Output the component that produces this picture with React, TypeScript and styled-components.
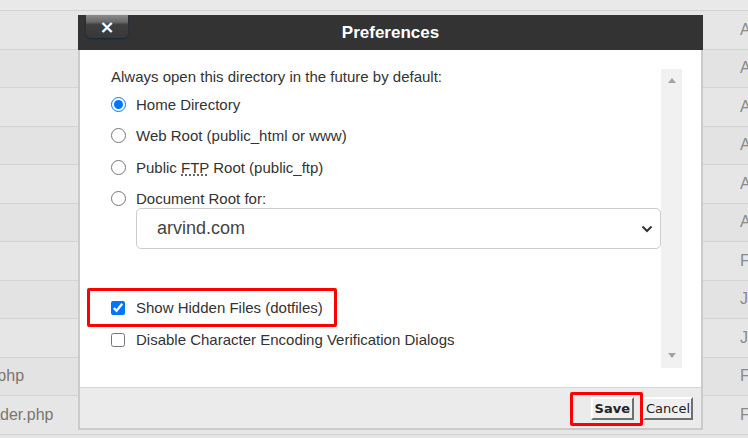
import React from 'react';
import styled, { createGlobalStyle } from 'styled-components';

interface FileRow {
    name: string;
    modified: string;
}

const files: FileRow[] = [
    { name: '.well-known', modified: 'Apr 3, 2021, 10:12 AM' },
    { name: 'cgi-bin', modified: 'Apr 3, 2021, 10:12 AM' },
    { name: 'wp-admin', modified: 'Apr 14, 2021, 4:20 PM' },
    { name: 'wp-content', modified: 'Apr 14, 2021, 4:22 PM' },
    { name: 'wp-includes', modified: 'Apr 14, 2021, 4:20 PM' },
    { name: '.htaccess', modified: 'Apr 14, 2021, 4:31 PM' },
    { name: 'index.php', modified: 'Feb 6, 2020, 7:33 AM' },
    { name: 'license.txt', modified: 'Jan 1, 2021, 12:00 AM' },
    { name: 'robots.txt', modified: 'Jan 1, 2021, 12:00 AM' },
    { name: 'wp-activate.php', modified: 'Feb 6, 2020, 7:33 AM' },
    { name: 'wp-blog-header.php', modified: 'Feb 6, 2020, 7:33 AM' },
];

const GlobalStyle = createGlobalStyle`
    html, body {
        margin: 0;
        padding: 0;
        overflow: hidden;
    }
    body {
        font-family: "Liberation Sans", Arial, sans-serif;
    }
`;

const Page = styled.div`
    position: relative;
    width: 748px;
    height: 438px;
    overflow: hidden;
    background: #e5e5e5;
`;

const FileTable = styled.div`
    display: flex;
    flex-direction: column;
`;

const TopStrip = styled.div`
    height: 11px;
    box-sizing: border-box;
    background: #e9e9e9;
    border-bottom: 1px solid #d3d3d3;
`;

const Row = styled.div<{ $alt: boolean }>`
    height: 38.5px;
    box-sizing: border-box;
    display: flex;
    align-items: center;
    border-bottom: 1px solid #d3d3d3;
    background: ${(p) => (p.$alt ? '#e3e3e3' : '#e6e6e6')};
    font-size: 16px;
    white-space: nowrap;
`;

const NameCell = styled.div`
    margin-left: -88px;
    width: 828px;
    flex: none;
    color: #7c746c;
`;

const DateCell = styled.div`
    flex: none;
    color: #8a8a8a;
`;

const Dialog = styled.div`
    position: absolute;
    left: 78px;
    top: 15px;
    width: 625px;
    display: flex;
    flex-direction: column;
`;

const Header = styled.div`
    height: 35px;
    background: #333333;
    display: grid;
    grid-template-columns: 1fr auto 1fr;
    align-items: center;
`;

const CloseButton = styled.button`
    align-self: start;
    justify-self: start;
    margin-left: 8px;
    width: 42px;
    height: 23px;
    padding: 0;
    border: none;
    border-radius: 0 0 5px 5px;
    background: linear-gradient(#8a8a8a 0%, #6a6a6a 30%, #3f3f3f 42%, #383838 100%);
    box-shadow: 0 1px 2px #10283c;
    color: #fff;
    font: bold 18px/23px "DejaVu Sans", sans-serif;
`;

const Title = styled.h1`
    margin: 0;
    color: #fff;
    font-size: 17px;
    font-weight: bold;
`;

const Panel = styled.div`
    border: 2px solid #cbcbcb;
    border-top: none;
    display: flex;
    flex-direction: column;
`;

const Body = styled.div`
    height: 337px;
    box-sizing: border-box;
    padding: 19px 19px 19px 31px;
    background: #fff;
`;

const Scroller = styled.div`
    display: flex;
    height: 299px;
`;

const Content = styled.div`
    flex: 1;
    display: flex;
    flex-direction: column;
    color: #333;
    font-size: 15px;
`;

const Prompt = styled.div`
    line-height: 16px;
    margin-bottom: 9px;
`;

const OptionList = styled.div`
    display: flex;
    flex-direction: column;
    gap: 11.5px;
`;

const Option = styled.label`
    position: relative;
    display: flex;
    align-items: center;
    height: 20px;
`;

const Radio = styled.input.attrs({ type: 'radio', name: 'dirpref' })`
    width: 15px;
    height: 15px;
    margin: 0 10px 0 0;
    accent-color: #0075ff;
`;

const Checkbox = styled.input.attrs({ type: 'checkbox' })`
    width: 14px;
    height: 14px;
    margin: 0 11px 0 0;
`;

const Abbr = styled.abbr`
    text-decoration: underline dotted;
    text-underline-offset: 2px;
`;

const DocRoot = styled.div`
    display: flex;
    flex-direction: column;
`;

const SelectWrap = styled.div`
    position: relative;
    margin: -1px 0 0 25px;
`;

const DomainSelect = styled.select`
    width: 100%;
    height: 41.5px;
    box-sizing: border-box;
    appearance: none;
    padding: 0 0 0 20px;
    border: 1px solid #cccccc;
    border-radius: 5px;
    background: #fff;
    color: #444;
    font: 18px "Liberation Sans", Arial, sans-serif;
`;

const Chevron = styled.svg`
    position: absolute;
    right: 8px;
    top: 17px;
    pointer-events: none;
`;

const CheckList = styled.div`
    display: flex;
    flex-direction: column;
    gap: 12px;
    margin-top: 48.5px;
`;

const Highlight = styled.div<{ $left: number; $top: number; $width: number; $height: number }>`
    position: absolute;
    left: ${(p) => p.$left}px;
    top: ${(p) => p.$top}px;
    width: ${(p) => p.$width}px;
    height: ${(p) => p.$height}px;
    box-sizing: border-box;
    border: 3px solid #ff0000;
    border-radius: 2px;
    pointer-events: none;
`;

const Scrollbar = styled.div`
    width: 21px;
    flex: none;
    background: #f1f1f1;
    display: flex;
    flex-direction: column;
    justify-content: space-between;
    align-items: center;
    padding: 9px 0 10px;
    box-sizing: border-box;
`;

const Arrow = styled.div<{ $down?: boolean }>`
    width: 0;
    height: 0;
    border-left: 4.5px solid transparent;
    border-right: 4.5px solid transparent;
    ${(p) => (p.$down ? 'border-top: 5px solid #a3a3a3;' : 'border-bottom: 5px solid #a3a3a3;')}
`;

const Footer = styled.div`
    height: 41px;
    box-sizing: border-box;
    border-top: 1px solid #d4d4d4;
    background: #ebebeb;
    display: flex;
    align-items: center;
    justify-content: flex-end;
    gap: 9px;
    padding-right: 8px;
`;

const ButtonSlot = styled.div`
    position: relative;
    display: flex;
`;

const FooterButton = styled.button<{ $primary?: boolean }>`
    height: 23px;
    padding: 0 ${(p) => (p.$primary ? 2 : 1)}px;
    border: 2px solid;
    border-color: #ffffff #6f6f6f #6f6f6f #ffffff;
    background: #efefef;
    color: #222;
    font: ${(p) => (p.$primary ? 'bold' : 'normal')} 13px "DejaVu Sans", Verdana, sans-serif;
`;

export default function App() {
    return (
        <Page>
            <GlobalStyle />
            <FileTable>
                <TopStrip />
                {files.map((f, i) => (
                    <Row key={f.name} $alt={i % 2 === 1}>
                        <NameCell>{f.name}</NameCell>
                        <DateCell>{f.modified}</DateCell>
                    </Row>
                ))}
            </FileTable>

            <Dialog>
                <Header>
                    <CloseButton>×</CloseButton>
                    <Title>Preferences</Title>
                </Header>
                <Panel>
                    <Body>
                        <Scroller>
                            <Content>
                                <Prompt>Always open this directory in the future by default:</Prompt>
                                <OptionList>
                                    <Option>
                                        <Radio defaultChecked />
                                        Home Directory
                                    </Option>
                                    <Option>
                                        <Radio />
                                        Web Root (public_html or www)
                                    </Option>
                                    <Option>
                                        <Radio />
                                        <span>
                                            Public <Abbr title="File Transfer Protocol">FTP</Abbr> Root (public_ftp)
                                        </span>
                                    </Option>
                                    <DocRoot>
                                        <Option>
                                            <Radio />
                                            Document Root for:
                                        </Option>
                                        <SelectWrap>
                                            <DomainSelect defaultValue="arvind.com">
                                                <option value="arvind.com">arvind.com</option>
                                            </DomainSelect>
                                            <Chevron width="12" height="8" viewBox="0 0 12 8">
                                                <path d="M1.5 1.5 L6 6 L10.5 1.5" fill="none" stroke="#333" strokeWidth="2" />
                                            </Chevron>
                                        </SelectWrap>
                                    </DocRoot>
                                </OptionList>
                                <CheckList>
                                    <Option>
                                        <Checkbox defaultChecked />
                                        Show Hidden Files (dotfiles)
                                        <Highlight $left={-24} $top={-10} $width={250} $height={39} />
                                    </Option>
                                    <Option>
                                        <Checkbox />
                                        Disable Character Encoding Verification Dialogs
                                    </Option>
                                </CheckList>
                            </Content>
                            <Scrollbar>
                                <Arrow />
                                <Arrow $down />
                            </Scrollbar>
                        </Scroller>
                    </Body>
                    <Footer>
                        <ButtonSlot>
                            <FooterButton $primary>Save</FooterButton>
                            <Highlight $left={-21} $top={-5} $width={73} $height={34} />
                        </ButtonSlot>
                        <ButtonSlot>
                            <FooterButton>Cancel</FooterButton>
                        </ButtonSlot>
                    </Footer>
                </Panel>
            </Dialog>
        </Page>
    );
}
